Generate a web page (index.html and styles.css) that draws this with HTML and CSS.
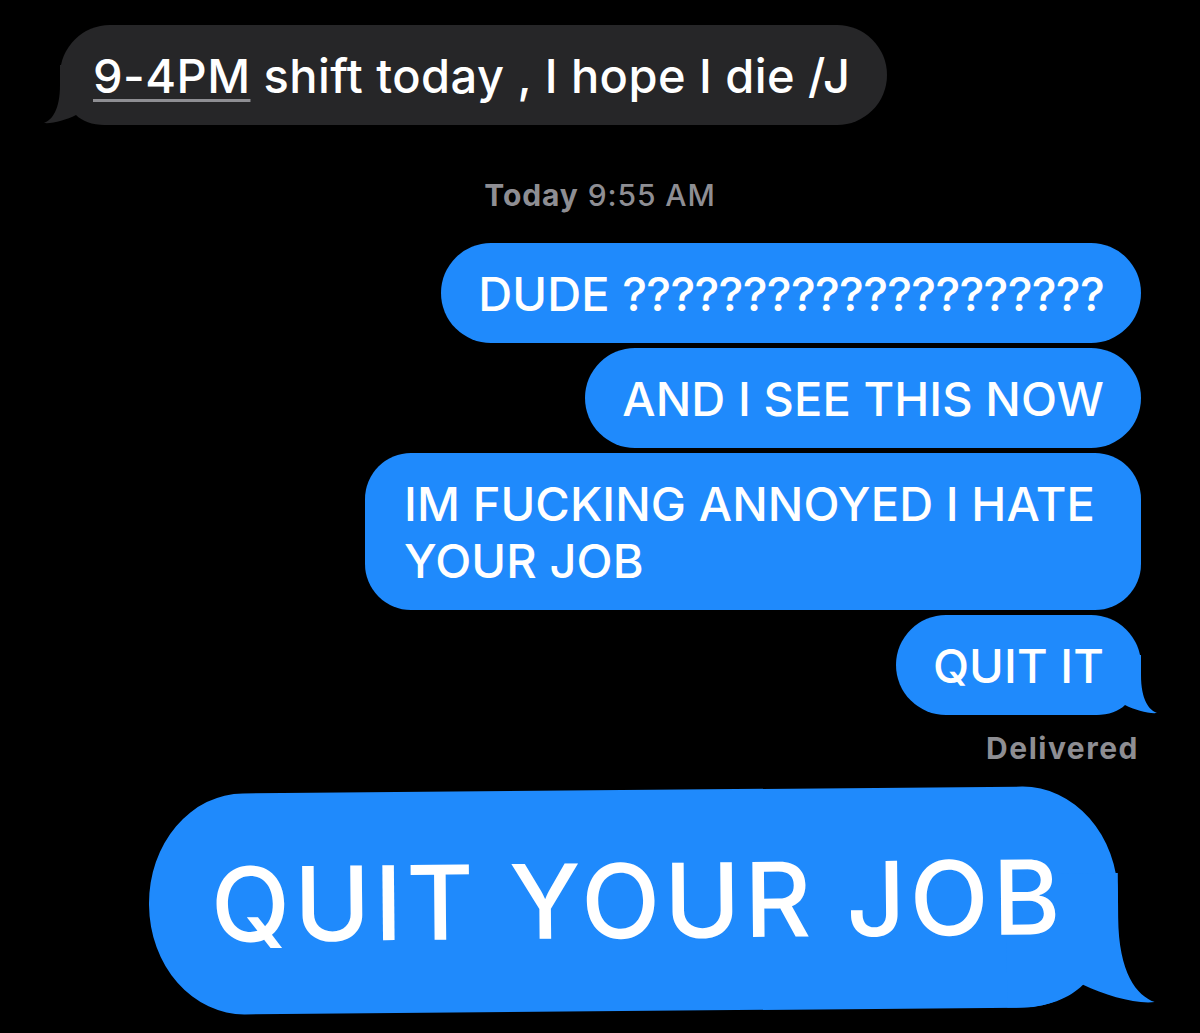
FILE: index.html
```html
<!DOCTYPE html>
<html lang="en">
<head>
<meta charset="utf-8">
<title>Messages</title>
<link rel="stylesheet" href="styles.css">
</head>
<body>
<main class="thread">
  <div class="row row-in">
    <div class="bubble bubble-gray"><span class="detected">9-4PM</span> shift today , I hope I die /J<svg class="tail tail-left" viewBox="0 0 70 60" width="70" height="60" aria-hidden="true"><path d="M50 0 L50 20 C50 45 58 55 66 58 C58 59 44 55 34 50 C28 56 18 60 5 60 L0 60 L0 0 Z"/></svg></div>
  </div>

  <div class="stamp"><b>Today</b> 9:55 AM</div>

  <div class="row row-out">
    <div class="bubble bubble-blue">DUDE <span class="qs">????????????????????</span></div>
  </div>
  <div class="row row-out">
    <div class="bubble bubble-blue">AND I SEE THIS NOW</div>
  </div>
  <div class="row row-out">
    <div class="bubble bubble-blue bubble-multi">IM FUCKING ANNOYED I HATE<br>YOUR JOB</div>
  </div>
  <div class="row row-out">
    <div class="bubble bubble-blue">QUIT IT<svg class="tail tail-right" viewBox="0 0 70 60" width="70" height="60" aria-hidden="true"><path d="M50 0 L50 20 C50 45 58 55 66 58 C58 59 44 55 34 50 C28 56 18 60 5 60 L0 60 L0 0 Z"/></svg></div>
  </div>

  <div class="status">Delivered</div>

  <div class="row row-out row-huge">
    <div class="bubble bubble-blue bubble-huge">QUIT YOUR JOB<svg class="tail tail-huge" viewBox="0 0 70 60" width="157" height="134" aria-hidden="true"><path d="M50 0 L50 20 C50 45 58 55 66 58 C58 59 44 55 34 50 C28 56 18 60 5 60 L0 60 L0 0 Z"/></svg></div>
  </div>
</main>
</body>
</html>
```

FILE: styles.css
```css
html, body {
  margin: 0;
  padding: 0;
  background: #000;
}

body {
  width: 1200px;
  height: 1033px;
  overflow: hidden;
  font-family: Inter, "Liberation Sans", Arial, sans-serif;
  color: #fff;
}

.thread {
  display: flex;
  flex-direction: column;
  padding-top: 25px;
}

.row {
  display: flex;
}

.row-in {
  justify-content: flex-start;
  padding-left: 60px;
}

.row-out {
  justify-content: flex-end;
  padding-right: 59px;
}

.row-out + .row-out {
  margin-top: 5px;
}

.bubble {
  position: relative;
  z-index: 0;
  isolation: isolate;
  font-size: 47px;
  font-weight: 500;
  letter-spacing: 0.1px;
  line-height: 57px;
  padding: 21.5px 37px 21.5px 37px;
  border-radius: 50px;
  white-space: nowrap;
}

.bubble-gray {
  background: #262628;
  padding-left: 33px;
  letter-spacing: 0.45px;
}

.bubble-blue {
  background: #1f8afc;
}

.qs {
  letter-spacing: -0.7px;
}

.bubble-multi {
  border-radius: 46px;
  padding-left: 39px;
  padding-right: 46px;
}

.detected {
  text-decoration: underline;
  text-decoration-color: #8e8e93;
  text-decoration-thickness: 3px;
  text-underline-offset: 6px;
}

.tail {
  position: absolute;
  bottom: 0;
  z-index: -1;
  display: block;
}

.bubble-gray .tail path {
  fill: #262628;
}

.bubble-blue .tail path {
  fill: #1f8afc;
}

.tail-right {
  right: -20px;
}

.tail-left {
  left: -20px;
  transform: scaleX(-1);
}

.stamp {
  margin-top: 53px;
  margin-bottom: 30px;
  text-align: center;
  font-size: 30px;
  line-height: 35px;
  letter-spacing: 0.9px;
  color: #8e8e93;
  font-weight: 500;
}

.stamp b {
  font-weight: 700;
}

.status {
  margin-top: 16px;
  padding-right: 61px;
  text-align: right;
  font-size: 30px;
  line-height: 35px;
  letter-spacing: 1.5px;
  font-weight: 700;
  color: #8e8e93;
}

.row-huge {
  margin-top: 24px;
  padding-right: 82px;
}

.bubble-huge {
  font-size: 103px;
  letter-spacing: 4px;
  line-height: 125px;
  padding: 48px 54px 48px 62px;
  border-radius: 95px / 110px;
  transform: rotate(-0.5deg);
}

.tail-huge {
  right: -45px;
}
```
